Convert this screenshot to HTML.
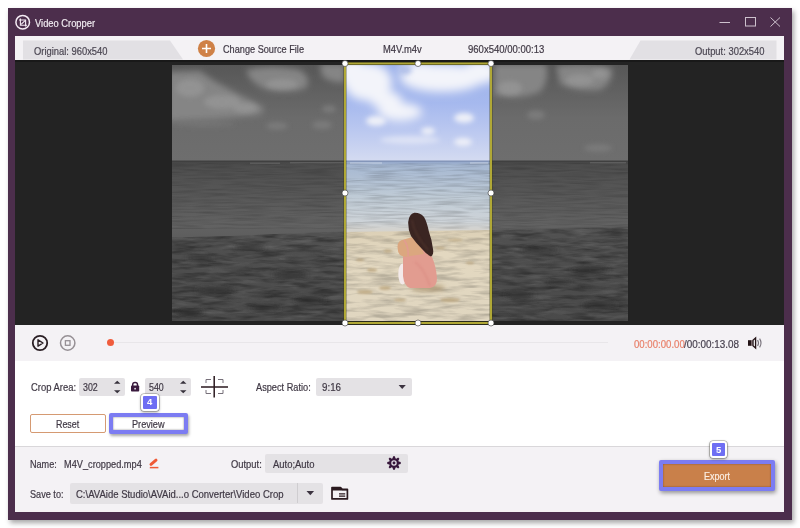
<!DOCTYPE html>
<html>
<head>
<meta charset="utf-8">
<style>
*{box-sizing:border-box;margin:0;padding:0}
html,body{width:800px;height:528px;overflow:hidden;background:#fff;font-family:"Liberation Sans",sans-serif;}
.abs{position:absolute}
#win{position:absolute;left:8px;top:8px;width:784px;height:512px;background:#4c2e4c;box-shadow:2px 3px 5px rgba(0,0,0,.35);}
#title{position:absolute;left:34px;top:16px;font-size:11.5px;color:#f3eef3;line-height:14px;}
#panel{position:absolute;left:15px;top:36px;width:769px;height:476px;background:#f4f2f5;}
#dark{position:absolute;left:15px;top:60px;width:769px;height:265px;background:#232323;}
#white{position:absolute;left:15px;top:361px;width:769px;height:85px;background:#fff;}
#sep{position:absolute;left:15px;top:446px;width:769px;height:1px;background:#d9d7da;}
.t{position:absolute;font-size:10.5px;color:#3f3844;line-height:14px;white-space:nowrap;transform-origin:0 50%;-webkit-text-stroke:0.2px;}
.inp{position:absolute;background:#e4e2e5;border-radius:2px;}
</style>
</head>
<body>
<div id="win"></div>
<!-- title icon -->
<svg class="abs" style="left:12px;top:12px" width="22" height="22" viewBox="12 12 22 22">
  <circle cx="22.7" cy="22.2" r="6.8" fill="none" stroke="#f5ecf5" stroke-width="1.5"/>
  <path d="M20.4 18.6 V25.2 H27 M19 20 H25.6 V26.6" fill="none" stroke="#f5ecf5" stroke-width="1.1"/>
  <path d="M21.2 24.4 L25 20.6" stroke="#f5ecf5" stroke-width="1.1"/>
</svg>
<!-- window controls -->
<svg class="abs" style="left:715px;top:12px" width="70" height="20" viewBox="0 0 70 20">
  <path d="M4.5 10.5 H15" stroke="#cdc1cd" stroke-width="1"/>
  <rect x="30.5" y="5.5" width="10" height="8.5" fill="none" stroke="#cdc1cd" stroke-width="1"/>
  <path d="M55.5 5.5 L65 14.5 M65 5.5 L55.5 14.5" stroke="#cdc1cd" stroke-width="1"/>
</svg>

<div id="panel"></div>
<!-- tabs -->
<svg class="abs" style="left:15px;top:36px" width="769" height="24" viewBox="0 0 769 24">
  <path d="M8 4.5 H155 L168 23.5 H8 Z" fill="#e2e0e4"/>
  <path d="M625.5 4.5 H761.5 V23.5 H614.5 Z" fill="#e2e0e4"/>
</svg>
<svg class="abs" style="left:197px;top:39px" width="20" height="20" viewBox="0 0 20 20">
  <circle cx="9.5" cy="9.5" r="8.6" fill="#cf8147"/>
  <path d="M9.5 5 V14 M5 9.5 H14" stroke="#fff" stroke-width="1.6"/>
</svg>

<div id="dark"></div>
<div class="abs" style="left:15px;top:60px;width:769px;height:2px;background:#191919"></div>
<!-- video -->
<div id="video" class="abs" style="left:172px;top:65px;width:456px;height:256px;overflow:hidden;background:#555">
<svg width="456" height="256" viewBox="172 65 456 256" style="position:absolute;left:0;top:0">
  <defs>
    <linearGradient id="gsky" x1="0" y1="65" x2="0" y2="161" gradientUnits="userSpaceOnUse">
      <stop offset="0" stop-color="#575757"/><stop offset=".3" stop-color="#626262"/><stop offset=".55" stop-color="#6b6b6b"/><stop offset="1" stop-color="#6e6e6e"/>
    </linearGradient>
    <linearGradient id="gsea" x1="0" y1="161" x2="0" y2="236" gradientUnits="userSpaceOnUse">
      <stop offset="0" stop-color="#444"/><stop offset=".06" stop-color="#4e4e4e"/><stop offset=".5" stop-color="#595959"/><stop offset=".85" stop-color="#626262"/><stop offset="1" stop-color="#5e5e5e"/>
    </linearGradient>
    <linearGradient id="gsand" x1="0" y1="228" x2="0" y2="321" gradientUnits="userSpaceOnUse">
      <stop offset="0" stop-color="#525252"/><stop offset=".3" stop-color="#4e4e4e"/><stop offset="1" stop-color="#4a4a4a"/>
    </linearGradient>
    <filter id="b6" x="-50%" y="-50%" width="200%" height="200%"><feGaussianBlur stdDeviation="5"/></filter>
    <filter id="b3" x="-50%" y="-50%" width="200%" height="200%"><feGaussianBlur stdDeviation="2.5"/></filter>
    <filter id="b1" x="-50%" y="-50%" width="200%" height="200%"><feGaussianBlur stdDeviation="1"/></filter>
    <filter id="nsand" x="0" y="0" width="100%" height="100%"><feTurbulence type="fractalNoise" baseFrequency="0.035 0.22" numOctaves="3" seed="7"/><feColorMatrix type="matrix" values="0 0 0 0 0  0 0 0 0 0  0 0 0 0 0  2.6 0 0 0 -1.05"/><feComposite in2="SourceGraphic" operator="in"/></filter>
    <filter id="nsandl" x="0" y="0" width="100%" height="100%"><feTurbulence type="fractalNoise" baseFrequency="0.04 0.2" numOctaves="3" seed="21"/><feColorMatrix type="matrix" values="0 0 0 0 1  0 0 0 0 1  0 0 0 0 1  2.2 0 0 0 -1.05"/><feComposite in2="SourceGraphic" operator="in"/></filter>
    <filter id="nsea" x="0" y="0" width="100%" height="100%"><feTurbulence type="fractalNoise" baseFrequency="0.03 0.5" numOctaves="2" seed="4"/><feColorMatrix type="matrix" values="0 0 0 0 0  0 0 0 0 0  0 0 0 0 0  1.6 0 0 0 -0.62"/><feComposite in2="SourceGraphic" operator="in"/></filter>
  </defs>
  <rect x="172" y="65" width="456" height="97" fill="url(#gsky)"/>
  <rect x="172" y="161" width="456" height="76" fill="url(#gsea)"/>
  <path d="M172 237.5 L230 236 L300 233 L345 231.5 L492 230 L560 228.5 L628 227 V321 H172 Z" fill="url(#gsand)"/>
  <rect x="172" y="160.5" width="456" height="1.5" fill="#404040"/>
  <path d="M172 237.5 L230 236 L300 233 L345 231.5 L492 230 L560 228.5 L628 227 V321 H172 Z" fill="#000" filter="url(#nsand)" opacity=".32"/>
  <path d="M172 237.5 L230 236 L300 233 L345 231.5 L492 230 L560 228.5 L628 227 V321 H172 Z" fill="#fff" filter="url(#nsandl)" opacity=".10"/>
  <rect x="172" y="163" width="456" height="66" fill="#000" filter="url(#nsea)" opacity=".2"/>
  <path d="M290 162.8 H345 M590 162.8 H626 M250 163.2 H280" stroke="#808080" stroke-width="1" opacity=".55"/>
  <!-- gray clouds -->
  <filter id="b4" x="-50%" y="-50%" width="200%" height="200%"><feGaussianBlur stdDeviation="3.2"/></filter>
  <g fill="#858585" filter="url(#b4)">
    <path d="M168 72 L200 71 L214 81 L238 94 L262 106 Q266 112 258 115 L215 119 L168 121 Z"/>
    <path d="M246 70 Q270 64 300 70 Q312 78 306 88 Q290 94 268 90 Q250 84 246 70 Z"/>
    <path d="M320 64 H345 V82 Q332 84 322 76 Z"/>
    <path d="M494 64 H546 Q550 80 540 92 Q520 100 500 96 L494 96 Z"/>
    <path d="M556 66 Q585 62 612 68 Q614 82 600 90 Q575 92 560 84 Z"/>
  </g>
  <g fill="#969696" filter="url(#b3)" opacity=".8">
    <ellipse cx="190" cy="88" rx="14" ry="9"/>
    <ellipse cx="222" cy="102" rx="18" ry="7"/>
    <ellipse cx="245" cy="108" rx="12" ry="5"/>
    <ellipse cx="282" cy="84" rx="16" ry="5"/>
    <ellipse cx="510" cy="88" rx="12" ry="7"/>
    <ellipse cx="580" cy="80" rx="14" ry="6"/>
    <ellipse cx="600" cy="74" rx="8" ry="5"/>
  </g>
  <g fill="#7c7c7c" filter="url(#b3)">
    <ellipse cx="277" cy="126" rx="11" ry="3.5"/>
    <ellipse cx="322" cy="125" rx="10" ry="4"/>
    <ellipse cx="329" cy="109" rx="7" ry="3.5"/>
    <ellipse cx="536" cy="115" rx="9" ry="4.5"/>
    <ellipse cx="598" cy="148" rx="14" ry="3.5"/>
    <ellipse cx="205" cy="124" rx="30" ry="3" opacity=".5"/>
  </g>
  <!-- sand blotches -->
  <g fill="#2a2a2a" filter="url(#b3)" opacity=".8">
    <ellipse cx="200" cy="258" rx="14" ry="2.5"/><ellipse cx="250" cy="248" rx="16" ry="2"/>
    <ellipse cx="290" cy="275" rx="18" ry="3"/><ellipse cx="215" cy="290" rx="20" ry="3"/>
    <ellipse cx="310" cy="300" rx="16" ry="3"/><ellipse cx="190" cy="312" rx="14" ry="3"/>
    <ellipse cx="540" cy="250" rx="18" ry="2.5"/><ellipse cx="590" cy="270" rx="20" ry="3"/>
    <ellipse cx="520" cy="295" rx="16" ry="3"/><ellipse cx="600" cy="305" rx="18" ry="3"/>
    <ellipse cx="560" cy="282" rx="12" ry="2"/><ellipse cx="265" cy="308" rx="16" ry="2.5"/>
  </g>
  <g fill="#505050" filter="url(#b3)" opacity=".7">
    <ellipse cx="230" cy="268" rx="18" ry="3"/><ellipse cx="300" cy="255" rx="20" ry="3"/>
    <ellipse cx="250" cy="298" rx="18" ry="3"/><ellipse cx="560" cy="262" rx="20" ry="3"/>
    <ellipse cx="600" cy="288" rx="18" ry="3"/><ellipse cx="530" cy="310" rx="20" ry="3"/>
  </g>
</svg>
<!-- colour crop -->
<svg width="146" height="259" viewBox="345 64 146 259" style="position:absolute;left:173px;top:-1px">
  <defs>
    <linearGradient id="csky" x1="0" y1="65" x2="0" y2="161" gradientUnits="userSpaceOnUse">
      <stop offset="0" stop-color="#9cb1ea"/><stop offset=".4" stop-color="#a6b9ee"/><stop offset=".7" stop-color="#bcc9f0"/><stop offset="1" stop-color="#d4dbf1"/>
    </linearGradient>
    <linearGradient id="csea" x1="0" y1="161" x2="0" y2="232" gradientUnits="userSpaceOnUse">
      <stop offset="0" stop-color="#8fa3c8"/><stop offset=".06" stop-color="#a6b8d2"/><stop offset=".5" stop-color="#bfcbd6"/><stop offset=".85" stop-color="#cdd3d8"/><stop offset="1" stop-color="#d6d3cc"/>
    </linearGradient>
    <linearGradient id="csand" x1="0" y1="230" x2="0" y2="323" gradientUnits="userSpaceOnUse">
      <stop offset="0" stop-color="#dcd0b6"/><stop offset=".25" stop-color="#e3d8c0"/><stop offset="1" stop-color="#e0d6c0"/>
    </linearGradient>
  </defs>
  <rect x="345" y="64" width="146" height="98" fill="url(#csky)"/>
  <rect x="345" y="161" width="146" height="72" fill="url(#csea)"/>
  <path d="M345 232 L420 231 L491 230 V323 H345 Z" fill="url(#csand)"/>
  <rect x="345" y="160.5" width="146" height="1.2" fill="#7f90b4"/>
  <g fill="#f3f4fa" filter="url(#b6)">
    <ellipse cx="368" cy="82" rx="24" ry="19"/>
    <ellipse cx="352" cy="72" rx="16" ry="14"/>
    <ellipse cx="442" cy="78" rx="42" ry="14"/>
    <ellipse cx="480" cy="72" rx="18" ry="12"/>
    <ellipse cx="420" cy="70" rx="20" ry="8"/>
    <ellipse cx="400" cy="112" rx="22" ry="9"/>
    <ellipse cx="386" cy="100" rx="16" ry="9"/>
  </g>
  <ellipse cx="405" cy="70" rx="7" ry="5" fill="#a9b9e6" filter="url(#b3)" opacity=".8"/>
  <g fill="#eef0f8" filter="url(#b3)">
    <ellipse cx="376" cy="121" rx="10" ry="5"/>
    <ellipse cx="464" cy="118" rx="10" ry="5"/>
    <ellipse cx="428" cy="131" rx="7" ry="3.5"/>
    <ellipse cx="463" cy="142" rx="9" ry="4"/>
    <ellipse cx="410" cy="140" rx="30" ry="4" opacity=".6"/>
  </g>
  <path d="M345 232 L420 231 L491 230 V323 H345 Z" fill="#6b5a3a" filter="url(#nsand)" opacity=".18"/>
  <rect x="345" y="163" width="146" height="66" fill="#5a6f8a" filter="url(#nsea)" opacity=".22"/>
  <path d="M350 163 H382 M470 163 H488" stroke="#e6ecf4" stroke-width="1" opacity=".6"/>
  <!-- sand marks -->
  <g fill="#b9a37a" filter="url(#b1)" opacity=".75">
    <ellipse cx="372" cy="270" rx="5" ry="1.8"/><ellipse cx="388" cy="251" rx="4" ry="1.5"/>
    <ellipse cx="360" cy="260" rx="4" ry="1.2"/><ellipse cx="385" cy="288" rx="6" ry="2"/>
    <ellipse cx="440" cy="248" rx="5" ry="1.2"/><ellipse cx="470" cy="263" rx="4" ry="1.2"/>
    <ellipse cx="365" cy="292" rx="8" ry="2"/><ellipse cx="455" cy="240" rx="8" ry="1.2"/>
    <ellipse cx="400" cy="300" rx="6" ry="1.5"/><ellipse cx="450" cy="300" rx="10" ry="2"/>
  </g>
  <!-- woman -->
  <g>
    <ellipse cx="428" cy="288" rx="17" ry="3.5" fill="#a8916a" filter="url(#b3)" opacity=".75"/>
    <ellipse cx="402.5" cy="274" rx="4.2" ry="10.5" fill="#f3eaea"/>
    <path d="M403 256 Q404 246 409 240 L418 242 Q426 250 432 257 Q436 266 437 278 Q437 287 430 288 L410 288 Q404 286 403 276 Z" fill="#e29c90"/>
    <path d="M415 262 Q424 268 430 286" stroke="#d98b82" stroke-width="2" fill="none" opacity=".6" filter="url(#b1)"/>
    <path d="M397.5 247 Q397.5 240 404 239.5 L416 236 L421 246 L424 254 L410 256 Q404 258 400 255 Q397.5 252 397.5 247 Z" fill="#dba77f"/>
    <path d="M404 240 Q409 247 408 256" stroke="#e29c90" stroke-width="1.6" fill="none"/>
    <path d="M414.3 212.8 Q409 214 408.2 222 Q408 230 411 236 Q416 243 422 249 Q427 255 431 256.5 Q434 255 433 249 Q432 240 429 232 Q427 222 424 217 Q420 212.5 414.3 212.8 Z" fill="#3a2522"/>
    <path d="M412 220 Q414 234 428 250" stroke="#5a3a30" stroke-width="1.5" fill="none" opacity=".6" filter="url(#b1)"/>
  </g>
</svg>
</div>

<!-- crop frame -->
<svg class="abs" style="left:335px;top:55px" width="170" height="280" viewBox="335 55 170 280">
  <rect x="345" y="63.5" width="146" height="259.5" fill="none" stroke="#3a3a10" stroke-width="3.2" opacity=".55"/>
  <rect x="345" y="63.5" width="146" height="259.5" fill="none" stroke="#b0a836" stroke-width="2"/>
  <g fill="#fff" stroke="#333" stroke-width=".6">
    <circle cx="345" cy="63.5" r="3"/><circle cx="418" cy="63.5" r="3"/><circle cx="491" cy="63.5" r="3"/>
    <circle cx="345" cy="193" r="3"/><circle cx="491" cy="193" r="3"/>
    <circle cx="345" cy="323" r="3"/><circle cx="418" cy="323" r="3"/><circle cx="491" cy="323" r="3"/>
  </g>
</svg>
<div id="white"></div>
<div id="sep"></div>

<!-- playback -->
<svg class="abs" style="left:28px;top:332px" width="60" height="22" viewBox="0 0 60 22">
  <circle cx="12" cy="11" r="7.2" fill="none" stroke="#2a1f24" stroke-width="1.8"/>
  <path d="M10 7.8 L15 11 L10 14.2 Z" fill="none" stroke="#2a1f24" stroke-width="1.4" stroke-linejoin="round"/>
  <circle cx="39.7" cy="11" r="7.2" fill="none" stroke="#969095" stroke-width="1.5"/>
  <rect x="37.4" y="8.7" width="4.6" height="4.6" fill="none" stroke="#969095" stroke-width="1.3"/>
</svg>
<div class="abs" style="left:112px;top:342px;width:496px;height:1px;background:#e8e6e9"></div>
<div class="abs" style="left:107px;top:339px;width:7px;height:7px;border-radius:50%;background:#f05c3c"></div>
<svg class="abs" style="left:744px;top:334px" width="22" height="18" viewBox="744 334 22 18">
  <rect x="748" y="340.2" width="3.2" height="5.6" fill="#231316"/>
  <rect x="751.2" y="340.2" width="1.3" height="5.6" fill="#6a5558"/>
  <path d="M753 340.3 L755.6 338 V348 L753 345.7 Z" fill="none" stroke="#231316" stroke-width="1.3" stroke-linejoin="miter"/>
  <path d="M757.6 340 Q759.4 343 757.6 346 M759.6 338.6 Q762.4 343 759.6 347.4" stroke="#77717a" stroke-width="1.1" fill="none"/>
</svg>

<!-- crop area row -->
<div class="inp" style="left:79px;top:378px;width:46px;height:18px"></div>
<div class="inp" style="left:145px;top:378px;width:46px;height:18px"></div>
<svg class="abs" style="left:110px;top:376px" width="90" height="22" viewBox="110 376 90 22">
  <path d="M114 383.8 L117.25 380.8 L120.5 383.8 Z M114 390.2 L117.25 393.2 L120.5 390.2 Z" fill="#37323c"/>
  <path d="M180 383.8 L183.25 380.8 L186.5 383.8 Z M180 390.2 L183.25 393.2 L186.5 390.2 Z" fill="#37323c"/>
  <rect x="131" y="385.4" width="8.2" height="6.2" rx=".8" fill="#3a1a3e"/>
  <path d="M132.7 386 V384.6 Q132.7 382.4 135.1 382.4 Q137.5 382.4 137.5 384.6 V386" stroke="#3a1a3e" stroke-width="1.5" fill="none"/>
  <circle cx="135.1" cy="388.7" r=".9" fill="#e9e2ea"/>
</svg>
<svg class="abs" style="left:199px;top:374px" width="32" height="26" viewBox="0 0 32 26">
  <path d="M15.2 2 V23.6 M2 13 H29" stroke="#2b1a1f" stroke-width="1.5"/>
  <path d="M7 9 V5.5 H12 M19 5.5 H24 V9 M7 16 V19.5 H12 M19 19.5 H24 V16" stroke="#77707a" stroke-width="1" fill="none"/>
</svg>
<div class="inp" style="left:315.5px;top:377.5px;width:96px;height:18.5px"></div>
<svg class="abs" style="left:396px;top:382px" width="12" height="10" viewBox="396 382 12 10"><path d="M398.6 385 H405.8 L402.2 389 Z" fill="#3c3340"/></svg>

<!-- reset / preview -->
<div class="abs" style="left:30px;top:414px;width:76px;height:19px;border:1px solid #d59a72;border-radius:2px;background:#fff"></div>
<div class="abs" style="left:108.75px;top:413px;width:78.75px;height:21.25px;border:4px solid #7c7cf2;border-radius:2px;background:#fff;box-shadow:1px 2px 3px rgba(0,0,0,.35), inset 0 0 2px rgba(0,0,0,.5)"></div>
<div class="abs" style="left:141.2px;top:393.5px;width:17.8px;height:17.2px;border:2px solid #fff;border-radius:3px;background:#6e6ef3;box-shadow:0 0 0 .6px rgba(120,120,110,.7),0 1px 3px rgba(0,0,0,.45)"></div>

<!-- bottom -->
<svg class="abs" style="left:146px;top:456px" width="16" height="15" viewBox="146 456 16 15">
  <path d="M151 464.4 L156 460.2" stroke="#ef5a36" stroke-width="3" stroke-linecap="round"/>
  <path d="M149.8 467.6 H158.4" stroke="#ef5a36" stroke-width="1.5"/>
</svg>
<div class="inp" style="left:265px;top:453.5px;width:142.5px;height:19.5px"></div>
<svg class="abs" style="left:385.7px;top:455.3px" width="16" height="16" viewBox="0 0 16 16">
  <path d="M6.55 3.32 L7.12 1.26 L8.88 1.26 L9.45 3.32 L10.29 3.67 L12.14 2.61 L13.39 3.86 L12.33 5.71 L12.68 6.55 L14.74 7.12 L14.74 8.88 L12.68 9.45 L12.33 10.29 L13.39 12.14 L12.14 13.39 L10.29 12.33 L9.45 12.68 L8.88 14.74 L7.12 14.74 L6.55 12.68 L5.71 12.33 L3.86 13.39 L2.61 12.14 L3.67 10.29 L3.32 9.45 L1.26 8.88 L1.26 7.12 L3.32 6.55 L3.67 5.71 L2.61 3.86 L3.86 2.61 L5.71 3.67 Z" fill="#37173b"/>
  <circle cx="8" cy="8" r="2.1" fill="none" stroke="#e4dfe6" stroke-width="1.3"/>
</svg>
<div class="inp" style="left:70px;top:483px;width:253px;height:20.5px"></div>
<div class="abs" style="left:297px;top:483px;width:1px;height:20px;background:#cfcdd0"></div>
<svg class="abs" style="left:304px;top:488px" width="12" height="10" viewBox="304 488 12 10"><path d="M306.5 491 H314.1 L310.3 495.2 Z" fill="#3c3340"/></svg>
<svg class="abs" style="left:330px;top:485px" width="20" height="16" viewBox="330 485 20 16">
  <path d="M332 487.6 H340.5 L342.3 489.3 H347.4 V498.9 H332 Z" fill="none" stroke="#2b1a1f" stroke-width="1.7" stroke-linejoin="round"/>
  <path d="M332 487.5 H340.5 L342.3 489.3 H347.4 V490.4 H332 Z" fill="#2b1a1f"/>
  <path d="M339 493.8 H345.2 M339 496.1 H345.2" stroke="#2b1a1f" stroke-width="1.3"/>
</svg>

<!-- export -->
<div class="abs" style="left:659px;top:460px;width:116px;height:31px;border:4px solid #7c7cf2;border-radius:2px;background:#c9804a;box-shadow:1px 2px 4px rgba(0,0,0,.4), inset 0 0 2px rgba(0,0,0,.4)"></div>
<div class="abs" style="left:709.5px;top:440.9px;width:17.9px;height:17.4px;border:2px solid #fff;border-radius:3px;background:#6e6ef3;box-shadow:0 0 0 .6px rgba(120,120,110,.7),0 1px 3px rgba(0,0,0,.45)"></div>
<!--TEXT-START-->
<div class="t" style="left:34.50px;top:16.19px;color:#f1ecf1;font-size:11px;transform:scaleX(0.8482)">Video Cropper</div>
<div class="t" style="left:34.00px;top:44.36px;color:#4b4652;font-size:10.5px;transform:scaleX(0.8929)">Original: 960x540</div>
<div class="t" style="left:695.00px;top:44.36px;color:#4b4652;font-size:10.5px;transform:scaleX(0.8950)">Output: 302x540</div>
<div class="t" style="left:223.25px;top:41.66px;color:#3f3844;font-size:10.5px;transform:scaleX(0.8727)">Change Source File</div>
<div class="t" style="left:382.50px;top:41.66px;color:#3f3844;font-size:10.5px;transform:scaleX(0.8931)">M4V.m4v</div>
<div class="t" style="left:468.00px;top:41.66px;color:#3f3844;font-size:10.5px;transform:scaleX(0.9069)">960x540/00:00:13</div>
<div class="t" style="left:633.60px;top:336.56px;color:#e8806a;font-size:10.5px;transform:scaleX(0.9158)">00:00:00.00</div>
<div class="t" style="left:684.40px;top:336.56px;color:#47414f;font-size:10.5px;transform:scaleX(0.9419)">/00:00:13.08</div>
<div class="t" style="left:30.50px;top:380.36px;color:#3f3844;font-size:10.5px;transform:scaleX(0.8964)">Crop Area:</div>
<div class="t" style="left:83.25px;top:380.36px;color:#3f3844;font-size:10.5px;transform:scaleX(0.8414)">302</div>
<div class="t" style="left:149.25px;top:380.36px;color:#3f3844;font-size:10.5px;transform:scaleX(0.8414)">540</div>
<div class="t" style="left:255.50px;top:380.36px;color:#3f3844;font-size:10.5px;transform:scaleX(0.8759)">Aspect Ratio:</div>
<div class="t" style="left:321.70px;top:380.36px;color:#3f3844;font-size:10.5px;transform:scaleX(0.9297)">9:16</div>
<div class="t" style="left:56.25px;top:416.86px;color:#3f3844;font-size:10.5px;transform:scaleX(0.8474)">Reset</div>
<div class="t" style="left:131.75px;top:416.86px;color:#3f3844;font-size:10.5px;transform:scaleX(0.8699)">Preview</div>
<div class="t" style="left:30.00px;top:456.61px;color:#3f3844;font-size:10.5px;transform:scaleX(0.8646)">Name:</div>
<div class="t" style="left:64.25px;top:456.61px;color:#3f3844;font-size:10.5px;transform:scaleX(0.8764)">M4V_cropped.mp4</div>
<div class="t" style="left:231.25px;top:456.61px;color:#3f3844;font-size:10.5px;transform:scaleX(0.8925)">Output:</div>
<div class="t" style="left:272.50px;top:456.61px;color:#3f3844;font-size:10.5px;transform:scaleX(0.8997)">Auto;Auto</div>
<div class="t" style="left:29.50px;top:486.86px;color:#3f3844;font-size:10.5px;transform:scaleX(0.8694)">Save to:</div>
<div class="t" style="left:75.50px;top:486.86px;color:#3f3844;font-size:10.5px;transform:scaleX(0.9062)">C:\AVAide Studio\AVAid...o Converter\Video Crop</div>
<div class="t" style="left:703.50px;top:469.36px;color:#fbeee2;font-size:10.5px;transform:scaleX(0.8564)">Export</div>
<div class="t" style="left:147.00px;top:395.15px;color:#fff;font-size:8.8px;font-weight:bold;-webkit-text-stroke:0;transform:scaleX(1.0803)">4</div>
<div class="t" style="left:715.70px;top:442.88px;color:#fff;font-size:9px;font-weight:bold;-webkit-text-stroke:0;transform:scaleX(1.0567)">5</div>
<!--TEXT-END-->
</body>
</html>
